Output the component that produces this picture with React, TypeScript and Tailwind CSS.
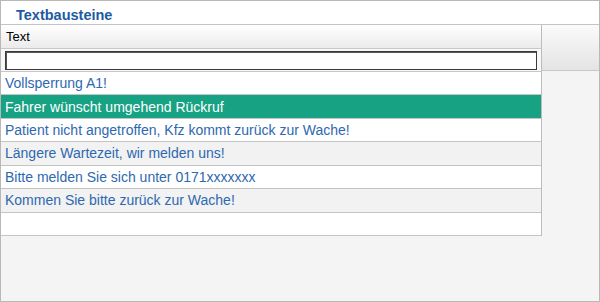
import React from "react";

const rows = [
  "Vollsperrung A1!",
  "Fahrer wünscht umgehend Rückruf",
  "Patient nicht angetroffen, Kfz kommt zurück zur Wache!",
  "Längere Wartezeit, wir melden uns!",
  "Bitte melden Sie sich unter 0171xxxxxxx",
  "Kommen Sie bitte zurück zur Wache!",
  "",
];

export default function App() {
  return (
    <div
      className="w-[600px] h-[302px] border border-[#b8b8b8] bg-[#f4f4f4] flex flex-col overflow-hidden"
      style={{ fontFamily: '"Liberation Sans", Arial, sans-serif' }}
    >
      <div className="h-[24px] shrink-0 bg-white border-b border-[#c4c4c4] pl-[15px] flex items-center">
        <span className="text-[14.5px] font-bold text-[#1d5aa2] leading-none pt-[5px]">Textbausteine</span>
      </div>
      <div className="flex">
        <div className="w-[541px] shrink-0 border-r border-[#bcbcbc] flex flex-col">
          <div className="h-[24px] border-b border-[#c8c8c8] bg-gradient-to-b from-white to-[#ebebeb] pl-[5px] flex items-center">
            <span className="text-[13px] text-black leading-none pb-[1px]">Text</span>
          </div>
          <div className="h-[23px] border-b border-[#c8c8c8] bg-[#f8f8f8] px-[4px] pt-[2px]">
            <div className="h-[19px] w-[532px] bg-white border border-[#3a3a3a] shadow-[inset_1px_1px_0_0_#555]" />
          </div>
          {rows.map((r, i) => (
            <div
              key={i}
              className={
                "h-[23.43px] border-b border-[#c4c4c4] pl-[4px] flex items-center text-[14px] leading-none whitespace-nowrap " +
                (i === 1
                  ? "bg-[#17a283] text-white"
                  : i % 2 === 1
                  ? "bg-[#f2f2f2] text-[#2e68b0]"
                  : "bg-white text-[#2e68b0]")
              }
            >
              {r}
            </div>
          ))}
        </div>
        <div className="flex-1">
          <div className="h-[46px] border-b border-[#c8c8c8] bg-gradient-to-b from-[#fafafa] to-[#e4e4e4]" />
        </div>
      </div>
    </div>
  );
}
